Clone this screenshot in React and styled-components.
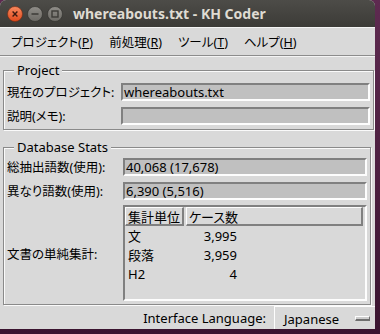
import styled, { createGlobalStyle } from "styled-components";

const GlobalStyle = createGlobalStyle`
  html, body {
    margin: 0;
    padding: 0;
  }
  body {
    width: 380px;
    height: 334px;
    overflow: hidden;
    background: linear-gradient(#5e2a50, #3a1430);
    font-family: "Noto Sans", "Noto Sans CJK JP", sans-serif;
    font-feature-settings: "palt";
    color: #000;
  }
`;

const Window = styled.div`
  width: 375px;
  height: 329px;
  display: flex;
  flex-direction: column;
  background: #d9d9d9;
  border-radius: 6px 6px 0 0;
  overflow: hidden;
`;

const TitleBar = styled.div`
  height: 27px;
  flex: none;
  display: flex;
  align-items: center;
  padding-left: 7px;
  background: linear-gradient(#4d4c48, #3c3b37);
`;

const WinButtons = styled.div`
  display: flex;
  gap: 4px;
`;

const Title = styled.div`
  margin-left: 10px;
  font-family: "Noto Sans", sans-serif;
  font-weight: bold;
  font-size: 14px;
  color: #dfdbd2;
  white-space: nowrap;
`;

const MenuBar = styled.div`
  height: 27px;
  flex: none;
  display: flex;
  align-items: center;
  padding-left: 3px;
  border-top: 1px solid #f4f4f4;
  border-bottom: 1px solid #8c8c8c;
  box-shadow: 0 1px 0 #f4f4f4;
  font-size: 12.5px;
`;

const MenuItem = styled.span`
  padding: 0 8px;
  white-space: nowrap;
`;

const Content = styled.div`
  flex: 1;
  display: flex;
  flex-direction: column;
  gap: 9px;
  padding: 6px 1px 0 3px;
`;

const Group = styled.fieldset`
  margin: 0 ${(p) => p.$trim || 0}px 0 0;
  padding: ${(p) => p.$top || 4}px 3px ${(p) => p.$bottom || 4}px 3px;
  border: 1px solid #8a8a8a;
  box-shadow: inset 1px 1px 0 #fafafa, 1px 1px 0 #fafafa;
  min-width: 0;
`;

const Legend = styled.legend`
  margin-left: 7px;
  padding: 0 3px;
  font-size: 13px;
  line-height: 16px;
  background: #d9d9d9;
`;

const Rows = styled.div`
  display: grid;
  grid-template-columns: ${(p) => p.$label}px 1fr;
  row-gap: 5px;
  align-items: center;
`;

const Label = styled.div`
  font-size: 12.5px;
  white-space: nowrap;
`;

const Entry = styled.div`
  height: 18px;
  box-sizing: border-box;
  display: flex;
  align-items: center;
  padding-left: 1px;
  background: #c0c0c0;
  border: 2px solid;
  border-color: #808080 #fdfdfd #fdfdfd #808080;
  font-size: 13px;
  white-space: nowrap;
  overflow: hidden;
`;

const Table = styled.div`
  height: 96px;
  box-sizing: border-box;
  border: 2px solid;
  border-color: #808080 #fdfdfd #fdfdfd #808080;
  padding: 0 2px 0 0;
  font-size: 13px;
`;

const HeadRow = styled.div`
  display: flex;
  gap: 2px;
`;

const HeadCell = styled.div`
  height: 19px;
  box-sizing: border-box;
  display: flex;
  align-items: center;
  padding-left: 2px;
  border: 1px solid;
  border-right-width: 2px;
  border-bottom-width: 2px;
  border-color: #fdfdfd #808080 #808080 #fdfdfd;
  white-space: nowrap;
  ${(p) => (p.$grow ? "flex: 1;" : `width: ${p.$w}px;`)}
`;

const DataRow = styled.div`
  height: 19px;
  display: flex;
  align-items: center;
  &:first-of-type {
    margin-top: 1px;
  }
`;

const UnitCell = styled.div`
  width: 61px;
  padding-left: 3px;
  box-sizing: border-box;
`;

const CountCell = styled.div`
  width: 51px;
  text-align: right;
`;

const Footer = styled.div`
  height: 26px;
  flex: none;
  display: flex;
  align-items: center;
  justify-content: flex-end;
  gap: 8px;
  font-size: 13px;
`;

const Select = styled.div`
  width: 101px;
  height: 24px;
  flex: none;
  box-sizing: border-box;
  display: flex;
  align-items: center;
  padding: 0 0 0 9px;
  border-top: 1px solid #fdfdfd;
  border-left: 1px solid #fdfdfd;
`;

const SelectText = styled.span`
  flex: 1;
`;

const Indicator = styled.div`
  flex: none;
  width: 15px;
  height: 5px;
  margin-right: 5px;
  box-sizing: border-box;
  border-top: 1px solid #fdfdfd;
  border-left: 1px solid #fdfdfd;
  border-right: 1px solid #6e6e6e;
  border-bottom: 2px solid #6e6e6e;
  background: #cdcdcd;
`;

const CloseBtn = () => (
  <svg width="16" height="16" viewBox="0 0 16 16">
    <defs>
      <linearGradient id="cg" x1="0" y1="0" x2="0" y2="1">
        <stop offset="0" stopColor="#f88a5f" />
        <stop offset="1" stopColor="#e04a1c" />
      </linearGradient>
    </defs>
    <circle cx="8" cy="8" r="7.5" fill="url(#cg)" stroke="#7a2a10" strokeWidth="0.6" />
    <path d="M5.6 5.6 L10.4 10.4 M10.4 5.6 L5.6 10.4" stroke="#3b1a10" strokeWidth="1.4" />
  </svg>
);

const MinBtn = () => (
  <svg width="16" height="16" viewBox="0 0 16 16">
    <defs>
      <linearGradient id="gg" x1="0" y1="0" x2="0" y2="1">
        <stop offset="0" stopColor="#8f8d88" />
        <stop offset="1" stopColor="#6b6964" />
      </linearGradient>
    </defs>
    <circle cx="8" cy="8" r="7.5" fill="url(#gg)" stroke="#2e2d2a" strokeWidth="0.6" />
    <path d="M4.5 8 H11.5" stroke="#3c3b37" strokeWidth="1.6" />
  </svg>
);

const MaxBtn = () => (
  <svg width="16" height="16" viewBox="0 0 16 16">
    <circle cx="8" cy="8" r="7.5" fill="url(#gg)" stroke="#2e2d2a" strokeWidth="0.6" />
    <rect x="5" y="5" width="6" height="6" fill="none" stroke="#3c3b37" strokeWidth="1.4" />
  </svg>
);

const menus = [
  ["プロジェクト", "P"],
  ["前処理", "R"],
  ["ツール", "T"],
  ["ヘルプ", "H"],
];

const units = [
  ["文", "3,995"],
  ["段落", "3,959"],
  ["H2", "4"],
];

export default function App() {
  return (
    <>
      <GlobalStyle />
      <Window>
        <TitleBar>
          <WinButtons>
            <CloseBtn />
            <MinBtn />
            <MaxBtn />
          </WinButtons>
          <Title>whereabouts.txt - KH Coder</Title>
        </TitleBar>

        <MenuBar>
          {menus.map(([name, key]) => (
            <MenuItem key={key}>
              {name}(<u>{key}</u>)
            </MenuItem>
          ))}
        </MenuBar>

        <Content>
          <Group $top={4} $bottom={4}>
            <Legend>Project</Legend>
            <Rows $label={114}>
              <Label>現在のプロジェクト:</Label>
              <Entry>whereabouts.txt</Entry>
              <Label>説明(メモ):</Label>
              <Entry />
            </Rows>
          </Group>

          <Group $top={2} $bottom={3} $trim={3}>
            <Legend>Database Stats</Legend>
            <Rows $label={116}>
              <Label>総抽出語数(使用):</Label>
              <Entry>40,068 (17,678)</Entry>
              <Label>異なり語数(使用):</Label>
              <Entry>6,390 (5,516)</Entry>
              <Label>文書の単純集計:</Label>
              <Table>
                <HeadRow>
                  <HeadCell $w={59}>集計単位</HeadCell>
                  <HeadCell $grow>ケース数</HeadCell>
                </HeadRow>
                {units.map(([u, n]) => (
                  <DataRow key={u}>
                    <UnitCell>{u}</UnitCell>
                    <CountCell>{n}</CountCell>
                  </DataRow>
                ))}
              </Table>
            </Rows>
          </Group>
        </Content>

        <Footer>
          <span>Interface Language:</span>
          <Select>
            <SelectText>Japanese</SelectText>
            <Indicator />
          </Select>
        </Footer>
      </Window>
    </>
  );
}
